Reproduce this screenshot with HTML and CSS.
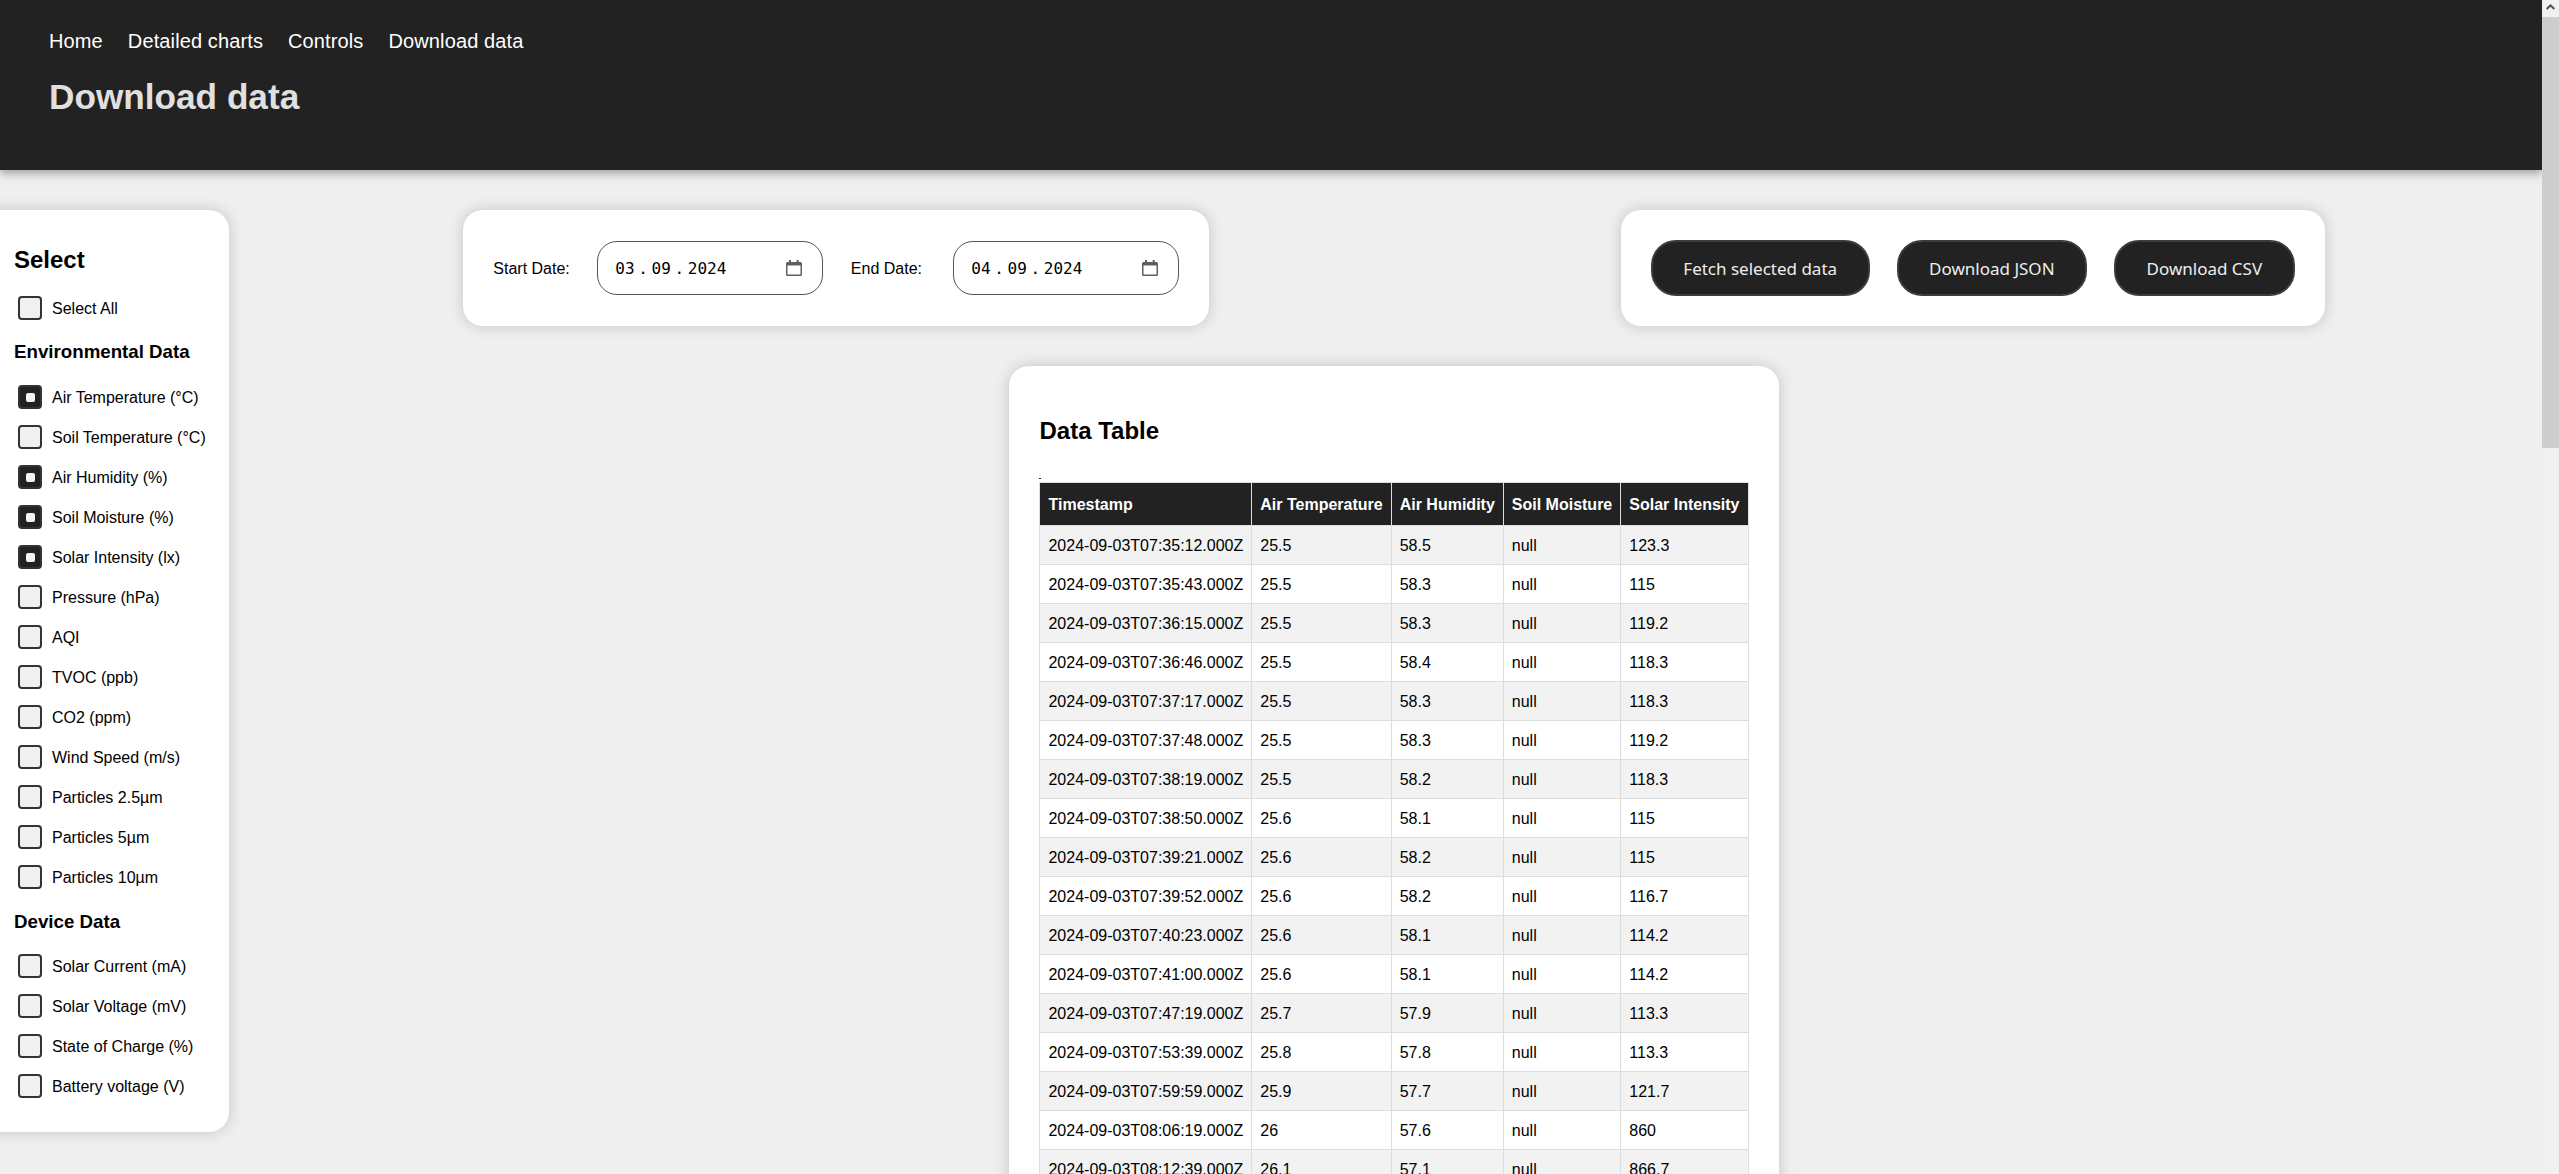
FILE: index.html
```html
<!DOCTYPE html>
<html>
<head>
    <title>Download data</title>
    <link rel="stylesheet" href="styles.css">
</head>
<body>
    <div class="page">
        <header class="site-header">
            <nav class="site-nav">
                <a href="#">Home</a>
                <a href="#">Detailed charts</a>
                <a href="#">Controls</a>
                <a href="#">Download data</a>
            </nav>
            <h1>Download data</h1>
        </header>

        <div class="layout">
            <aside class="card sidebar">
                <h2>Select</h2>
                <label class="check-row"><input type="checkbox">Select All</label>

                <h3>Environmental Data</h3>
                <div class="check-list">
                    <label class="check-row"><input type="checkbox" checked>Air Temperature (°C)</label>
                    <label class="check-row"><input type="checkbox">Soil Temperature (°C)</label>
                    <label class="check-row"><input type="checkbox" checked>Air Humidity (%)</label>
                    <label class="check-row"><input type="checkbox" checked>Soil Moisture (%)</label>
                    <label class="check-row"><input type="checkbox" checked>Solar Intensity (lx)</label>
                    <label class="check-row"><input type="checkbox">Pressure (hPa)</label>
                    <label class="check-row"><input type="checkbox">AQI</label>
                    <label class="check-row"><input type="checkbox">TVOC (ppb)</label>
                    <label class="check-row"><input type="checkbox">CO2 (ppm)</label>
                    <label class="check-row"><input type="checkbox">Wind Speed (m/s)</label>
                    <label class="check-row"><input type="checkbox">Particles 2.5µm</label>
                    <label class="check-row"><input type="checkbox">Particles 5µm</label>
                    <label class="check-row"><input type="checkbox">Particles 10µm</label>
                </div>

                <h3>Device Data</h3>
                <div class="check-list">
                    <label class="check-row"><input type="checkbox">Solar Current (mA)</label>
                    <label class="check-row"><input type="checkbox">Solar Voltage (mV)</label>
                    <label class="check-row"><input type="checkbox">State of Charge (%)</label>
                    <label class="check-row"><input type="checkbox">Battery voltage (V)</label>
                </div>
            </aside>

            <main class="main">
                <div class="toolbar">
                    <div class="card date-card">
                        <span class="date-label">Start Date:</span>
                        <div class="date-input">
                            <span class="date-value"><span>03</span><span class="date-sep">.</span><span>09</span><span class="date-sep">.</span><span>2024</span></span>
                            <svg class="calendar-icon" viewBox="0 0 16 16" width="16" height="16"><path fill="#5f5f5f" fill-rule="evenodd" d="M3 0h2v2h5.7V0h2v2h1.8A1.5 1.5 0 0 1 16 3.5v11a1.5 1.5 0 0 1-1.5 1.5h-13A1.5 1.5 0 0 1 0 14.5v-11A1.5 1.5 0 0 1 1.500 2H3zM1.500 5.500v9h13v-9z"/></svg>
                        </div>
                        <span class="date-label end-label">End Date:</span>
                        <div class="date-input">
                            <span class="date-value"><span>04</span><span class="date-sep">.</span><span>09</span><span class="date-sep">.</span><span>2024</span></span>
                            <svg class="calendar-icon" viewBox="0 0 16 16" width="16" height="16"><path fill="#5f5f5f" fill-rule="evenodd" d="M3 0h2v2h5.7V0h2v2h1.8A1.5 1.5 0 0 1 16 3.5v11a1.5 1.5 0 0 1-1.5 1.5h-13A1.5 1.5 0 0 1 0 14.5v-11A1.5 1.5 0 0 1 1.500 2H3zM1.500 5.500v9h13v-9z"/></svg>
                        </div>
                    </div>

                    <div class="card button-card">
                        <button>Fetch selected data</button>
                        <button>Download JSON</button>
                        <button>Download CSV</button>
                    </div>
                </div>

                <section class="card table-card">
                    <h2>Data Table</h2>
                    <div class="table-mark"></div>
                    <table>
                        <thead>
                            <tr><th>Timestamp</th><th>Air Temperature</th><th>Air Humidity</th><th>Soil Moisture</th><th>Solar Intensity</th></tr>
                        </thead>
                        <tbody>
                            <tr><td>2024-09-03T07:35:12.000Z</td><td>25.5</td><td>58.5</td><td>null</td><td>123.3</td></tr>
                            <tr><td>2024-09-03T07:35:43.000Z</td><td>25.5</td><td>58.3</td><td>null</td><td>115</td></tr>
                            <tr><td>2024-09-03T07:36:15.000Z</td><td>25.5</td><td>58.3</td><td>null</td><td>119.2</td></tr>
                            <tr><td>2024-09-03T07:36:46.000Z</td><td>25.5</td><td>58.4</td><td>null</td><td>118.3</td></tr>
                            <tr><td>2024-09-03T07:37:17.000Z</td><td>25.5</td><td>58.3</td><td>null</td><td>118.3</td></tr>
                            <tr><td>2024-09-03T07:37:48.000Z</td><td>25.5</td><td>58.3</td><td>null</td><td>119.2</td></tr>
                            <tr><td>2024-09-03T07:38:19.000Z</td><td>25.5</td><td>58.2</td><td>null</td><td>118.3</td></tr>
                            <tr><td>2024-09-03T07:38:50.000Z</td><td>25.6</td><td>58.1</td><td>null</td><td>115</td></tr>
                            <tr><td>2024-09-03T07:39:21.000Z</td><td>25.6</td><td>58.2</td><td>null</td><td>115</td></tr>
                            <tr><td>2024-09-03T07:39:52.000Z</td><td>25.6</td><td>58.2</td><td>null</td><td>116.7</td></tr>
                            <tr><td>2024-09-03T07:40:23.000Z</td><td>25.6</td><td>58.1</td><td>null</td><td>114.2</td></tr>
                            <tr><td>2024-09-03T07:41:00.000Z</td><td>25.6</td><td>58.1</td><td>null</td><td>114.2</td></tr>
                            <tr><td>2024-09-03T07:47:19.000Z</td><td>25.7</td><td>57.9</td><td>null</td><td>113.3</td></tr>
                            <tr><td>2024-09-03T07:53:39.000Z</td><td>25.8</td><td>57.8</td><td>null</td><td>113.3</td></tr>
                            <tr><td>2024-09-03T07:59:59.000Z</td><td>25.9</td><td>57.7</td><td>null</td><td>121.7</td></tr>
                            <tr><td>2024-09-03T08:06:19.000Z</td><td>26</td><td>57.6</td><td>null</td><td>860</td></tr>
                            <tr><td>2024-09-03T08:12:39.000Z</td><td>26.1</td><td>57.1</td><td>null</td><td>866.7</td></tr>
                        </tbody>
                    </table>
                </section>
            </main>
        </div>
    </div>

    <div class="scrollbar">
        <div class="scroll-up"><svg viewBox="0 0 9 6" width="9" height="6"><path fill="#505050" d="M4.500 0 9 4.300 7.600 5.700 4.500 2.800 1.400 5.700 0 4.300z"/></svg></div>
        <div class="scroll-thumb"></div>
    </div>
</body>
</html>
```

FILE: styles.css
```css
html, body {
    height: 100%;
    overflow: hidden;
}
body {
    margin: 0;
    font-family: "Liberation Sans", Arial, sans-serif;
    font-size: 16px;
    color: #000;
    background-color: #efefef;
}
.page {
    margin-right: 17px;
}
.site-header {
    box-sizing: border-box;
    height: 170px;
    padding: 30px 49px 0;
    background-color: #222;
    box-shadow: 0 4px 8px rgba(0, 0, 0, 0.3);
    position: relative;
}
.site-nav {
    display: flex;
    gap: 25px;
}
.site-nav a {
    color: #fff;
    font-size: 20px;
    letter-spacing: 0.12px;
    text-decoration: none;
}
.site-header h1 {
    margin: 24px 0 0;
    color: #e0e0e0;
    font-size: 35.2px;
}
.layout {
    display: flex;
    align-items: flex-start;
    gap: 17px;
    margin-top: 40px;
}
.card {
    background-color: #fff;
    border-radius: 20px;
    box-shadow: 0 0 15px rgba(0, 0, 0, 0.18);
}
.sidebar {
    box-sizing: border-box;
    flex: none;
    width: 249px;
    margin-left: -20px;
    padding: 36px 0 34px 34px;
}
.sidebar h2 {
    margin: 0 0 22px;
    font-size: 24px;
    line-height: 28px;
}
.sidebar h3 {
    margin: 21.3px 0 22px;
    font-size: 18.72px;
    line-height: 21.9px;
}
.check-list {
    display: flex;
    flex-direction: column;
    gap: 16px;
}
.check-row {
    display: flex;
    align-items: flex-start;
    gap: 10px;
    height: 24px;
    margin-left: 4px;
    line-height: 26px;
}
.check-row input {
    appearance: none;
    box-sizing: border-box;
    flex: none;
    display: flex;
    align-items: center;
    justify-content: center;
    width: 24px;
    height: 24px;
    margin: 0;
    background-color: #f0f0f0;
    border: 2px solid #333;
    border-radius: 4px;
}
.check-row input:checked {
    background-color: #222;
}
.check-row input:checked::after {
    content: "";
    width: 9px;
    height: 9px;
    background-color: #f4f4f4;
    border-radius: 2px;
}
.main {
    flex: 1;
    min-width: 0;
}
.toolbar {
    display: flex;
    justify-content: center;
    gap: 412px;
}
.date-card {
    display: flex;
    align-items: center;
    height: 116px;
    padding: 0 30px;
}
.date-label {
    min-width: 75px;
    margin-right: 27px;
    padding-top: 1px;
}
.end-label {
    margin-left: 28px;
}
.date-input {
    box-sizing: border-box;
    display: flex;
    align-items: center;
    justify-content: space-between;
    width: 226px;
    height: 54px;
    padding: 0 20px 0 17.5px;
    border: 1px solid #555;
    border-radius: 20px;
}
.date-value {
    display: flex;
    font-family: "DejaVu Sans Mono", monospace;
    font-size: 16px;
}
.date-sep {
    width: 17px;
    text-align: center;
}
.button-card {
    display: flex;
    align-items: center;
    gap: 27px;
    height: 116px;
    padding: 0 30px;
}
.button-card button {
    height: 56px;
    padding: 0 30.5px;
    color: #eee;
    background-color: #222;
    border: 2px solid #3c3c3c;
    border-radius: 25px;
    font-family: "Noto Sans", sans-serif;
    font-size: 17px;
}
.table-card {
    width: fit-content;
    margin: 40px auto 0;
    padding: 51px 30.5px 40px;
}
.table-card h2 {
    margin: 0 0 33px;
    font-size: 24px;
    line-height: 28px;
}
.table-mark {
    width: 2px;
    height: 1px;
    margin-bottom: 3px;
    background-color: #223;
}
table {
    border-collapse: collapse;
}
th, td {
    padding: 11px 8px 9px;
    border: 1px solid #ddd;
    text-align: left;
    white-space: nowrap;
}
th {
    padding: 13px 8px 11px;
    color: #fff;
    background-color: #222;
}
tbody tr:nth-child(odd) {
    background-color: #f2f2f2;
}
.scrollbar {
    position: fixed;
    top: 0;
    right: 0;
    bottom: 0;
    width: 17px;
    background-color: #f1f1f1;
}
.scroll-up {
    display: flex;
    justify-content: center;
    padding-top: 4px;
    height: 13px;
}
.scroll-thumb {
    height: 431px;
    background-color: #cdcdcd;
}
```
